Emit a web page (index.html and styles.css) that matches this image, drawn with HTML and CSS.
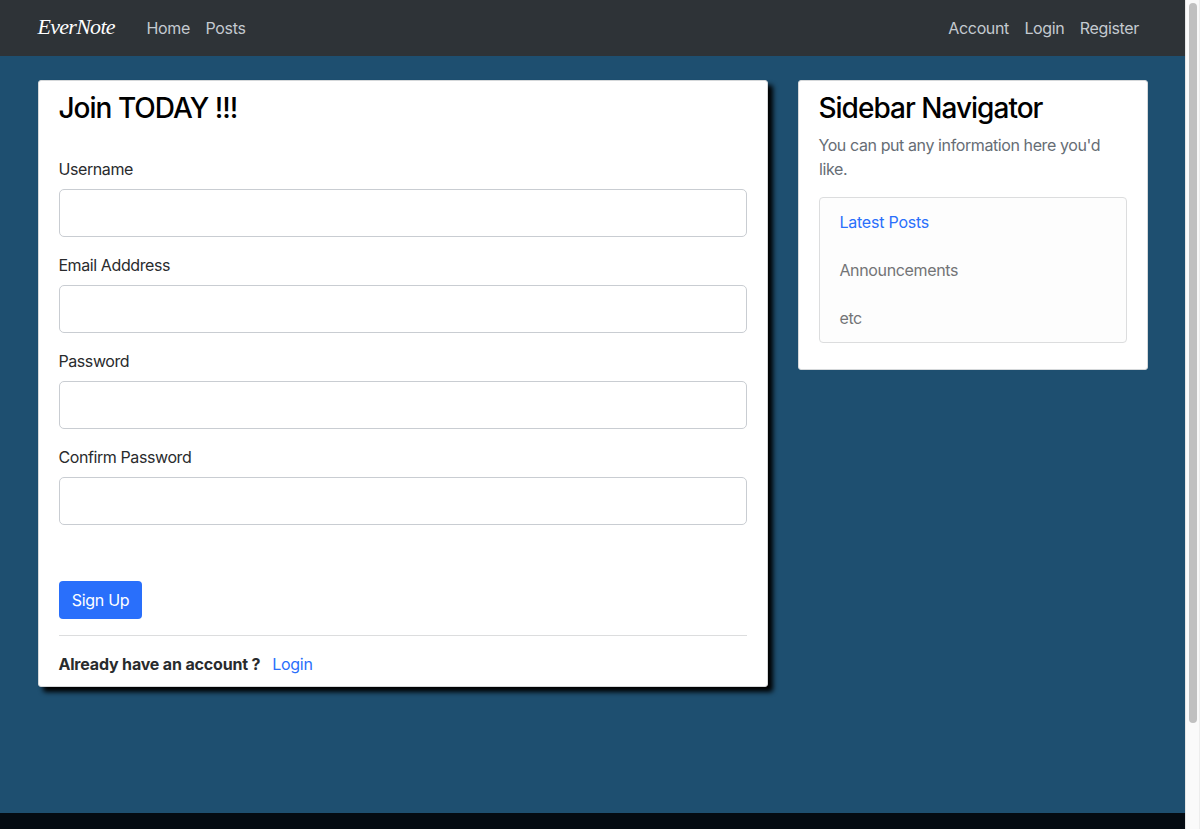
FILE: index.html
```html
<!DOCTYPE html>
<html lang="en">
<head>
<meta charset="utf-8">
<title>EverNote</title>
<link rel="stylesheet" href="styles.css">
</head>
<body>
<div class="page">
  <header class="navbar">
    <a class="brand" href="#">EverNote</a>
    <nav class="nav-main">
      <a class="nav-link" href="#">Home</a>
      <a class="nav-link" href="#">Posts</a>
    </nav>
    <nav class="nav-user">
      <a class="nav-link" href="#">Account</a>
      <a class="nav-link" href="#">Login</a>
      <a class="nav-link" href="#">Register</a>
    </nav>
  </header>
  <main class="layout">
    <section class="card card-form">
      <h1 class="heading">Join TODAY !!!</h1>
      <form class="form">
        <div class="field"><label class="label" for="username">Username</label><input class="input" id="username" type="text"></div>
        <div class="field"><label class="label" for="email">Email Adddress</label><input class="input" id="email" type="text"></div>
        <div class="field"><label class="label" for="password">Password</label><input class="input" id="password" type="password"></div>
        <div class="field"><label class="label" for="confirm">Confirm Password</label><input class="input" id="confirm" type="password"></div>
        <button class="button" type="button">Sign Up</button>
      </form>
      <p class="account-note"><strong class="question">Already have an account ?</strong><a class="link" href="#">Login</a></p>
    </section>
    <aside class="card card-side">
      <h2 class="heading">Sidebar Navigator</h2>
      <p class="muted">You can put any information here you'd like.</p>
      <ul class="list">
        <li class="list-item list-item-active">Latest Posts</li>
        <li class="list-item">Announcements</li>
        <li class="list-item">etc</li>
      </ul>
    </aside>
  </main>
  <footer class="footer"></footer>
</div>
<div class="scrollbar"><div class="thumb"></div></div>
</body>
</html>
```
FILE: styles.css
```css
* { box-sizing: border-box; }
body {
  margin: 0;
  display: flex;
  height: 829px;
  overflow: hidden;
  background: #1e4f70;
  color: #292b2d;
  font: 16px/24px Inter, "Liberation Sans", sans-serif;
  letter-spacing: -0.4px;
  text-indent: -0.6px;
}
a { text-decoration: none; }
.page { width: 1185px; display: flex; flex-direction: column; }
.navbar {
  height: 56px;
  padding: 0 46px 0 38px;
  display: flex;
  align-items: center;
  background: #2e3337;
}
.brand {
  width: 109px;
  margin-top: -2px;
  color: #fff;
  font: italic 22px/30px "Monotype Corsiva", "Apple Chancery", "URW Chancery L", Z003, "Liberation Serif", serif;
  letter-spacing: -0.7px;
}
.nav-main, .nav-user { display: flex; gap: 16px; }
.nav-user { margin-left: auto; }
.nav-link { color: #c4cad0; letter-spacing: -0.3px; }
.nav-user .nav-link { letter-spacing: -0.35px; }
.layout {
  flex: 1;
  display: flex;
  align-items: flex-start;
  gap: 30px;
  padding: 24px 0 0 38px;
}
.card {
  background: #fff;
  border: 1px solid #d5d8da;
  border-radius: 3px;
  padding: 10px 20px;
}
.card-form { width: 730px; height: 607px; box-shadow: 5px 5px 5px #000; }
.card-side { width: 350px; height: 290px; }
.heading {
  margin: 0;
  color: #000;
  font-size: 28px;
  line-height: 34px;
  font-weight: 500;
  letter-spacing: -0.98px;
}
.form {
  padding: 32px 0 16px;
  border-bottom: 1px solid #dcddde;
}
.field { height: 96px; }
.label { display: block; margin-bottom: 8px; }
.input {
  display: block;
  width: 100%;
  height: 48px;
  border: 1px solid #c9cdd2;
  border-radius: 5px;
  background: #fff;
  font: inherit;
  padding: 8px 16px;
}
.button {
  display: block;
  margin-top: 40px;
  width: 83px;
  height: 38px;
  padding: 0;
  border: 0;
  border-radius: 4px;
  background: #296ffb;
  color: #fff;
  font: inherit;
  letter-spacing: -0.3px;
}
.account-note { margin: 16px 0 0; }
.question { font-weight: 700; margin-right: 12px; letter-spacing: -0.17px; }
.link { color: #296ffb; letter-spacing: -0.3px; }
.muted { margin: 8px 0 16px; color: #666d75; }
.list {
  list-style: none;
  margin: 0;
  padding: 0;
  border: 1px solid #dcddde;
  border-radius: 4px;
  background: #fdfdfd;
}
.list-item { height: 48px; padding: 12px 20px; color: #737476; letter-spacing: -0.35px; }
.list-item-active { color: #296ffb; letter-spacing: -0.22px; }
.footer { height: 16px; background: #040b12; }
.scrollbar {
  width: 15px;
  padding: 3px 0 0 3px;
  background: #fafafa;
  border-left: 1px solid #e6e6e6;
  border-right: 1px solid #ededed;
}
.thumb { width: 8px; height: 720px; border-radius: 4px; background: #c0c0c0; }
```
